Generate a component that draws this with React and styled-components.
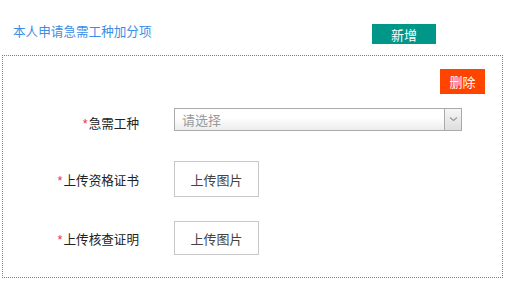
import React from 'react';
import styled, { createGlobalStyle } from 'styled-components';

const GlobalStyle = createGlobalStyle`
  html, body {
    margin: 0;
    padding: 0;
    background: #fff;
  }
  body {
    font-family: "Liberation Sans", "Noto Sans CJK SC", sans-serif;
    font-size: 13px;
  }
`;

const Page = styled.div`
  width: 521px;
  height: 289px;
  overflow: hidden;
`;

const Header = styled.div`
  display: flex;
  align-items: flex-start;
  height: 55px;
  padding: 24px 0 0 13px;
  box-sizing: border-box;
`;

const Title = styled.div`
  flex: 0 0 359px;
  color: #3a8ee6;
  font-size: 12.6px;
  line-height: 16px;
`;

const ActionButton = styled.button`
  display: block;
  border: 0;
  margin: 0;
  padding: 0;
  width: ${({ $w }) => $w}px;
  height: ${({ $h }) => $h}px;
  background: ${({ $bg }) => $bg};
  color: #fff;
  font-family: inherit;
  font-size: 13px;
  cursor: pointer;
`;

const Box = styled.div`
  margin-left: 2px;
  width: 501px;
  height: 223px;
  box-sizing: border-box;
  border: 1px dotted #4a84f0;
  display: flex;
  flex-direction: column;
`;

const BoxTop = styled.div`
  display: flex;
  justify-content: flex-end;
  padding: 13px 17px 0 0;
`;

const Row = styled.div`
  display: flex;
  align-items: center;
  margin-top: ${({ $top }) => $top}px;
`;

const Label = styled.div`
  flex: 0 0 136px;
  text-align: right;
  color: #222;
  font-size: 12.6px;
  padding-top: ${({ $offset }) => $offset || 0}px;
  margin-right: 35px;
`;

const Star = styled.span`
  color: #f0304a;
  margin-right: 1px;
`;

const Select = styled.div`
  width: 288px;
  height: 23px;
  box-sizing: border-box;
  border: 1px solid #aaa;
  background: linear-gradient(#fff 40%, #ececec);
  display: flex;
  align-items: center;
`;

const Placeholder = styled.span`
  flex: 1;
  padding-left: 7px;
  color: #999;
  font-size: 13px;
`;

const Arrow = styled.span`
  width: 16px;
  height: 100%;
  border-left: 1px solid #aaa;
  background: linear-gradient(#f6f6f6, #dedede);
  display: flex;
  align-items: center;
  justify-content: center;
`;

const UploadButton = styled.button`
  width: 85px;
  height: ${({ $h }) => $h}px;
  box-sizing: border-box;
  border: 1px solid #c8c8c8;
  background: #fff;
  color: #444;
  font-family: inherit;
  font-size: 13px;
  padding: 0;
  cursor: pointer;
`;

const uploads = [
  { label: '上传资格证书', top: 29, h: 36 },
  { label: '上传核查证明', top: 24, h: 34 },
];

export default function App() {
  return (
    <Page>
      <GlobalStyle />
      <Header>
        <Title>本人申请急需工种加分项</Title>
        <ActionButton $w={64} $h={20} $bg="#009688">新增</ActionButton>
      </Header>
      <Box>
        <BoxTop>
          <ActionButton $w={45} $h={25} $bg="#ff4400">删除</ActionButton>
        </BoxTop>
        <Row $top={12}>
          <Label $offset={7}><Star>*</Star>急需工种</Label>
          <Select>
            <Placeholder>请选择</Placeholder>
            <Arrow>
              <svg width="9" height="6" viewBox="0 0 9 6">
                <path d="M1 1.5 L4.5 4.5 L8 1.5" fill="none" stroke="#999" strokeWidth="1.2" />
              </svg>
            </Arrow>
          </Select>
        </Row>
        {uploads.map((u) => (
          <Row key={u.label} $top={u.top}>
            <Label><Star>*</Star>{u.label}</Label>
            <UploadButton $h={u.h}>上传图片</UploadButton>
          </Row>
        ))}
      </Box>
    </Page>
  );
}
